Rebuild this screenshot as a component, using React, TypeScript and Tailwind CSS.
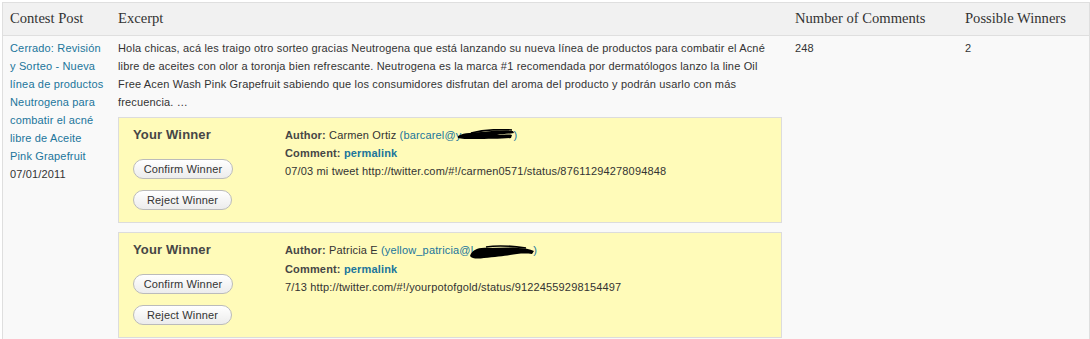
import React from "react"

type Winner = {
    name: string
    emailStart: string
    scribble: "a" | "b"
    text: string
}

const winners: Winner[] = [
    {
        name: "Carmen Ortiz",
        emailStart: "barcarel@y",
        scribble: "a",
        text: "07/03 mi tweet http://twitter.com/#!/carmen0571/status/87611294278094848",
    },
    {
        name: "Patricia E",
        emailStart: "yellow_patricia@l",
        scribble: "b",
        text: "7/13 http://twitter.com/#!/yourpotofgold/status/91224559298154497",
    },
]

function Scribble({ kind }: { kind: "a" | "b" }) {
    if (kind === "a") {
        return (
            <svg width="58" height="12" viewBox="0 0 58 12" className="inline-block align-middle -ml-[4px] -mr-[2px] -mt-[2px]">
                <path
                    d="M1 7 C8 3 16 4 24 3 C34 2 44 1 56 2 L57 4 C50 5 44 5 40 6 C46 6 52 5 55 6 L54 9 C44 10 30 10 18 10 C10 10 4 10 1 9 Z"
                    fill="#000"
                />
                <path d="M14 4 C26 1 40 0 55 1" stroke="#000" strokeWidth="1.6" fill="none" />
            </svg>
        )
    }
    return (
        <svg width="68" height="16" viewBox="0 0 68 16" className="inline-block align-middle -ml-[5px] -mr-[3px] mt-[2px]">
            <path
                d="M2 12 C4 6 10 3 20 4 C30 4 40 3 50 4 C56 4 62 5 66 7 L64 10 C56 9 48 10 42 11 C36 12 26 13 16 14 C10 15 4 15 2 12 Z"
                fill="#000"
            />
            <path d="M18 3 C30 1 44 2 58 4" stroke="#000" strokeWidth="1.6" fill="none" />
        </svg>
    )
}

function WinnerBox({ w }: { w: Winner }) {
    return (
        <div className="flex border border-[#dcdcdc] bg-[#fffbb9] pl-[14px] pt-[8px] pb-[12px] h-[106px]">
            <div className="w-[152px] shrink-0">
                <div className="font-bold text-[13px] leading-[18px] text-[#464646]">Your Winner</div>
                <div className="mt-[15px] flex flex-col gap-[11px] items-start">
                    <button className="h-[20px] w-[100px] rounded-full border border-[#bbbbbb] bg-gradient-to-b from-white to-[#ececec] text-[11px] tracking-[0.15px] text-[#333]">
                        Confirm Winner
                    </button>
                    <button className="h-[20px] w-[99px] rounded-full border border-[#bbbbbb] bg-gradient-to-b from-white to-[#ececec] text-[11px] tracking-[0.15px] text-[#333]">
                        Reject Winner
                    </button>
                </div>
            </div>
            <div className="text-[11px] leading-[18px] text-[#333]">
                <div className="whitespace-nowrap">
                    <span className="font-bold text-[#464646]">Author:</span> {w.name}{" "}
                    <span className="text-[#21759b]">
                        ({w.emailStart}
                        <Scribble kind={w.scribble} />)
                    </span>
                </div>
                <div>
                    <span className="font-bold text-[#464646]">Comment:</span>{" "}
                    <span className="font-bold text-[#21759b]">permalink</span>
                </div>
                <div className="whitespace-nowrap">{w.text}</div>
            </div>
        </div>
    )
}

export default function App() {
    return (
        <div className="w-[1090px] h-[339px] bg-white pt-[2px] pl-[2px] font-['Liberation_Sans',Arial,sans-serif] tracking-[0.16px] overflow-hidden">
            <div className="border-l border-t border-r border-[#dfdfdf] bg-[#f9f9f9] h-[400px]">

                <div className="grid grid-cols-[107px_677px_170px_1fr] bg-[#f1f1f1] border-b border-[#dfdfdf] h-[33px] items-center font-['Liberation_Serif',Georgia,serif] text-[14.6px] tracking-normal text-[#333]">
                    <div className="pl-[7px]">Contest Post</div>
                    <div className="pl-[8px]">Excerpt</div>
                    <div className="pl-[8px]">Number of Comments</div>
                    <div className="pl-[8px]">Possible Winners</div>
                </div>

                <div className="grid grid-cols-[107px_677px_170px_1fr] text-[11px] leading-[18px] text-[#333] pt-[3px]">

                    <div className="pl-[7px]">
                        <span className="text-[#21759b] whitespace-nowrap">
                            Cerrado: Revisión<br />
                            y Sorteo - Nueva<br />
                            línea de productos<br />
                            Neutrogena para<br />
                            combatir el acné<br />
                            libre de Aceite<br />
                            Pink Grapefruit
                        </span>
                        <br />
                        07/01/2011
                    </div>

                    <div className="pl-[8px] pr-[5px]">
                        <p className="whitespace-nowrap">
                            Hola chicas, acá les traigo otro sorteo gracias Neutrogena que está lanzando su nueva línea de productos para combatir el Acné<br />
                            libre de aceites con olor a toronja bien refrescante. Neutrogena es la marca #1 recomendada por dermatólogos lanzo la line Oil<br />
                            Free Acen Wash Pink Grapefruit sabiendo que los consumidores disfrutan del aroma del producto y podrán usarlo con más<br />
                            frecuencia. …
                        </p>
                        <div className="mt-[6px] flex flex-col gap-[9px]">
                            {winners.map((w) => (
                                <WinnerBox key={w.name} w={w} />
                            ))}
                        </div>
                    </div>

                    <div className="pl-[8px]">248</div>
                    <div className="pl-[8px]">2</div>

                </div>
            </div>
        </div>
    )
}
